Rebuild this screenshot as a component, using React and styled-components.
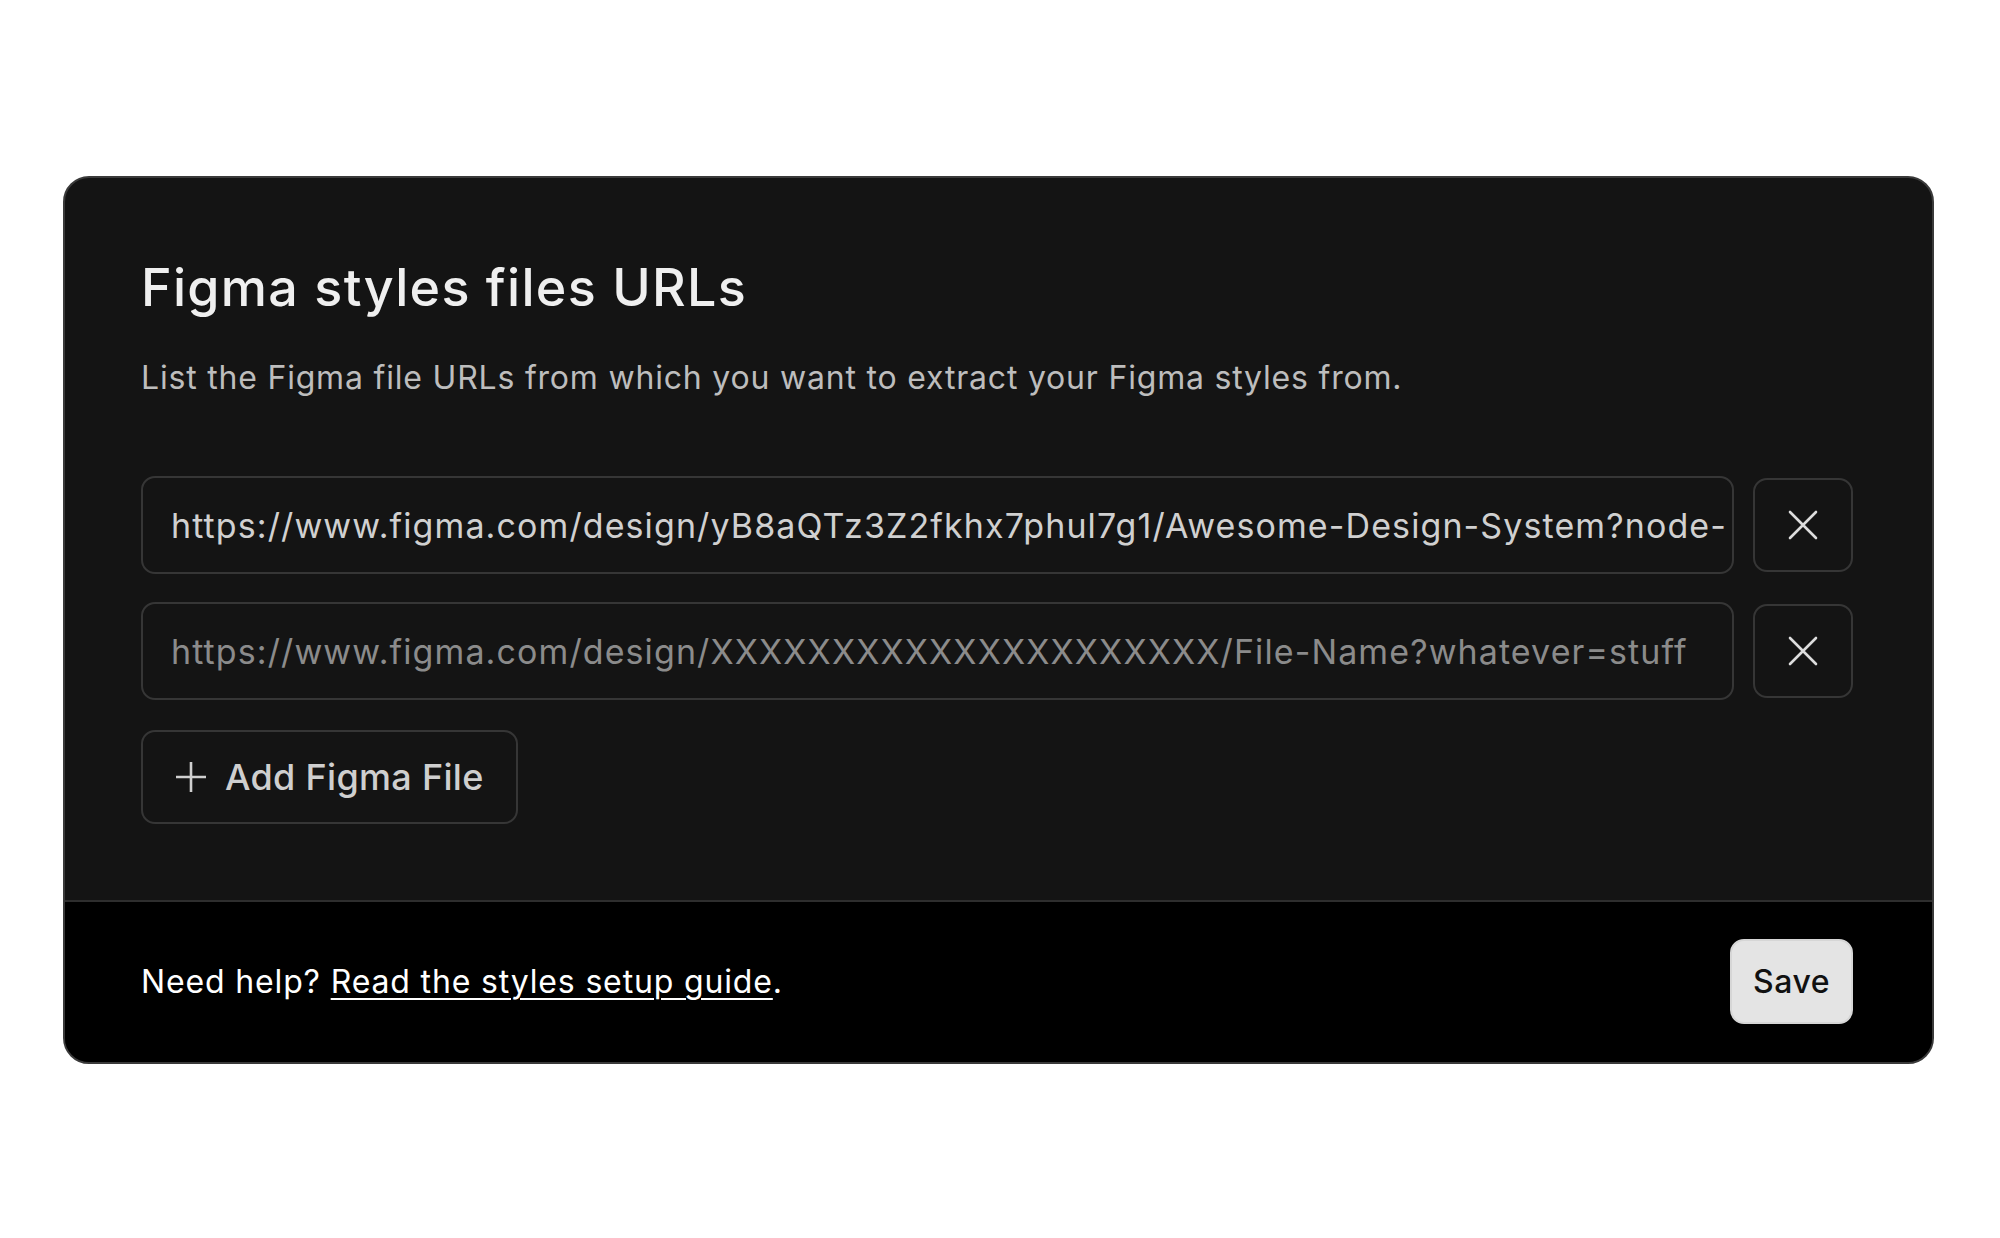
import styled, { createGlobalStyle } from "styled-components";

const GlobalStyle = createGlobalStyle`
  * {
    box-sizing: border-box;
  }

  body {
    margin: 0;
    background: #fff;
    font-family: Inter, "Noto Sans", "Liberation Sans", sans-serif;
  }
`;

const Page = styled.div`
  padding: 176px 66px 0 63px;
`;

const Card = styled.section`
  border: 2px solid #3a3a3a;
  border-radius: 26px;
  background: #141414;
  overflow: hidden;
`;

const Body = styled.div`
  padding: 78px 79px 76px 76px;
`;

const Title = styled.h1`
  margin: 0;
  color: #efefef;
  font-size: 52px;
  font-weight: 500;
  line-height: 63px;
  letter-spacing: 1.3px;
`;

const Description = styled.p`
  margin: 39px 0 0;
  color: #bdbdbd;
  font-size: 32px;
  line-height: 39px;
  letter-spacing: 0.8px;
`;

const UrlList = styled.div`
  display: flex;
  flex-direction: column;
  gap: 28px;
  margin-top: 79px;
`;

const UrlRow = styled.div`
  display: flex;
  align-items: center;
  gap: 19px;
`;

const UrlInput = styled.input`
  flex: 1;
  min-width: 0;
  height: 98px;
  padding: 0 4px 0 28px;
  border: 2px solid #363636;
  border-radius: 14px;
  background: #141414;
  color: #d0d0d0;
  font-family: inherit;
  font-size: 34px;
  letter-spacing: 1.1px;
  outline: none;

  &::placeholder {
    color: #8b8b8b;
  }
`;

const IconButton = styled.button`
  display: flex;
  align-items: center;
  justify-content: center;
  flex: none;
  width: 100px;
  height: 94px;
  padding: 0;
  border: 2px solid #363636;
  border-radius: 14px;
  background: #141414;
  color: #dddddd;
  cursor: pointer;
`;

const AddButton = styled.button`
  display: flex;
  align-items: center;
  gap: 18px;
  height: 94px;
  margin-top: 30px;
  padding: 0 32px 0 32px;
  border: 2px solid #363636;
  border-radius: 14px;
  background: #141414;
  color: #cfcfcf;
  font-family: inherit;
  font-size: 36px;
  font-weight: 500;
  letter-spacing: 0.3px;
  cursor: pointer;
`;

const Footer = styled.footer`
  display: flex;
  align-items: center;
  justify-content: space-between;
  padding: 37px 79px 38px 76px;
  border-top: 2px solid #2e2e2e;
  background: #000;
`;

const HelpText = styled.p`
  margin: 0;
  color: #fff;
  font-size: 32px;
  letter-spacing: 0.85px;
`;

const HelpLink = styled.a`
  color: #fff;
  text-decoration: underline;
  text-decoration-thickness: 2px;
  text-underline-offset: 5px;
`;

const SaveButton = styled.button`
  width: 123px;
  height: 85px;
  border: 2px solid #d6d6d6;
  border-radius: 14px;
  background: #e4e4e4;
  color: #111;
  font-family: inherit;
  font-size: 32px;
  font-weight: 500;
  letter-spacing: 0.5px;
  cursor: pointer;
`;

function CloseIcon() {
  return (
    <svg width="30" height="30" viewBox="0 0 30 30" fill="none">
      <path
        d="M2 2L28 28M28 2L2 28"
        stroke="currentColor"
        strokeWidth="2.6"
        strokeLinecap="round"
      />
    </svg>
  );
}

function PlusIcon() {
  return (
    <svg width="32" height="32" viewBox="0 0 32 32" fill="none">
      <path d="M16 1V31M1 16H31" stroke="currentColor" strokeWidth="2.6" />
    </svg>
  );
}

const urls = [
  {
    id: 1,
    value:
      "https://www.figma.com/design/yB8aQTz3Z2fkhx7phul7g1/Awesome-Design-System?node-id=0-1",
  },
  { id: 2, value: "" },
];

export default function App() {
  return (
    <>
      <GlobalStyle />
      <Page>
        <Card>
          <Body>
            <Title>Figma styles files URLs</Title>
            <Description>
              List the Figma file URLs from which you want to extract your Figma
              styles from.
            </Description>
            <UrlList>
              {urls.map((url) => (
                <UrlRow key={url.id}>
                  <UrlInput
                    defaultValue={url.value}
                    placeholder="https://www.figma.com/design/XXXXXXXXXXXXXXXXXXXXX/File-Name?whatever=stuff"
                  />
                  <IconButton aria-label="Remove">
                    <CloseIcon />
                  </IconButton>
                </UrlRow>
              ))}
            </UrlList>
            <AddButton>
              <PlusIcon />
              Add Figma File
            </AddButton>
          </Body>
          <Footer>
            <HelpText>
              Need help? <HelpLink href="#">Read the styles setup guide</HelpLink>.
            </HelpText>
            <SaveButton>Save</SaveButton>
          </Footer>
        </Card>
      </Page>
    </>
  );
}
